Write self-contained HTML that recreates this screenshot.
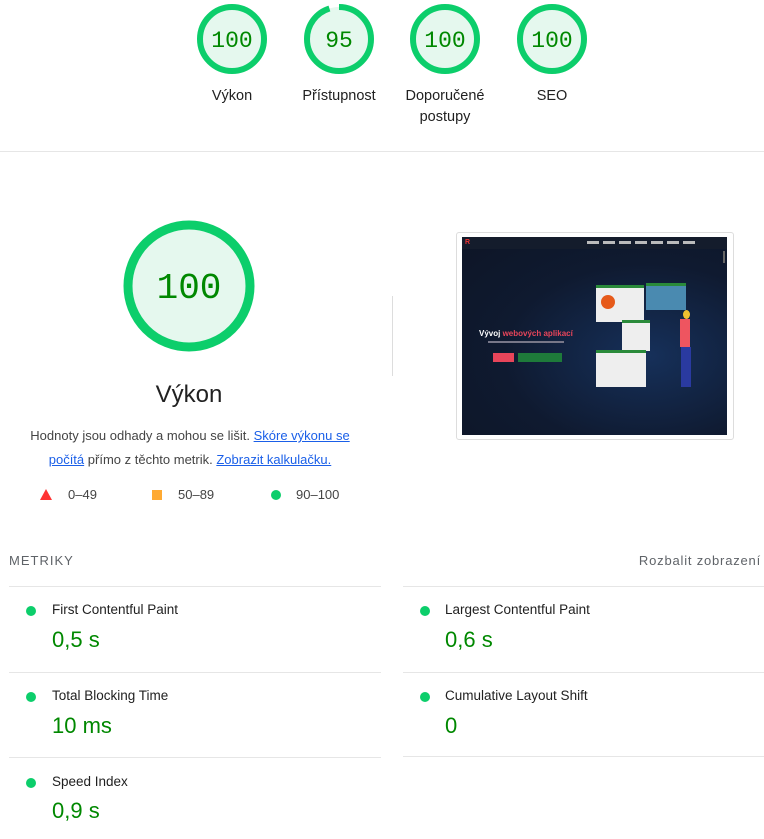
<!DOCTYPE html>
<html><head><meta charset="utf-8"><style>
body{margin:0;width:764px;height:839px;background:#fff;font-family:"Liberation Sans",Arial,sans-serif;position:relative;overflow:hidden;color:#212121}
.a{position:absolute}
.lbl{position:absolute;font-size:14.5px;color:#212121;text-align:center;width:110px;line-height:21px}
.gn{font-family:"Liberation Mono",monospace;fill:#008800}
.hr{position:absolute;height:1px;background:#e6e6e6}
.dot{position:absolute;width:10px;height:10px;border-radius:50%;background:#0cce6b}
.ml{position:absolute;font-size:13.5px;color:#212121}
.mv{position:absolute;font-size:22px;color:#008800}
a{color:#0b57d0;color:#1a5fe8}
</style></head><body>
<svg class="a" style="left:0;top:0" width="764" height="140">
<g fill="#e5f8ee" stroke="#0cce6b" stroke-width="6">
<circle cx="232" cy="39" r="32"/>
<circle cx="445" cy="39" r="32"/>
<circle cx="552" cy="39" r="32"/>
<circle cx="339" cy="39" r="32" stroke="none"/>
</g>
<circle cx="339" cy="39" r="32" fill="none" stroke="#0cce6b" stroke-width="6" stroke-dasharray="191 201" transform="rotate(-90 339 39)"/>
<g class="gn" font-size="23" text-anchor="middle">
<text x="232" y="47">100</text><text x="339" y="47">95</text><text x="445" y="47">100</text><text x="552" y="47">100</text>
</g>
</svg>
<div class="lbl" style="left:177px;top:86px">Výkon</div>
<div class="lbl" style="left:284px;top:86px">Přístupnost</div>
<div class="lbl" style="left:390px;top:86px">Doporučené<br>postupy</div>
<div class="lbl" style="left:497px;top:86px">SEO</div>
<div class="hr" style="left:0;top:151px;width:764px"></div>

<svg class="a" style="left:120px;top:218px" width="140" height="140">
<circle cx="69" cy="68" r="61" fill="#e5f8ee" stroke="#0cce6b" stroke-width="9"/>
<text x="69" y="80" class="gn" font-size="36" text-anchor="middle">100</text>
</svg>
<div class="a" style="left:89px;top:381px;width:200px;text-align:center;font-size:24px;color:#212121">Výkon</div>
<div class="a" style="left:20px;top:424px;width:340px;text-align:center;font-size:13px;line-height:24px;color:#444">Hodnoty jsou odhady a mohou se lišit. <a href="#">Skóre výkonu se počítá</a> přímo z těchto metrik. <a href="#">Zobrazit kalkulačku.</a></div>
<svg class="a" style="left:40px;top:489px" width="12" height="11"><polygon points="6,0 12,11 0,11" fill="#f33"/></svg>
<div class="a" style="left:68px;top:487px;font-size:13px;color:#444">0–49</div>
<div class="a" style="left:152px;top:490px;width:10px;height:10px;background:#fa3"></div>
<div class="a" style="left:178px;top:487px;font-size:13px;color:#444">50–89</div>
<div class="dot" style="left:271px;top:490px"></div>
<div class="a" style="left:296px;top:487px;font-size:13px;color:#444">90–100</div>

<div class="a" style="left:392px;top:296px;width:1px;height:80px;background:#ddd"></div>
<div class="a" style="left:456px;top:232px;width:276px;height:206px;border:1px solid #ddd;border-radius:3px;background:#fff"></div>
<div class="a" style="left:462px;top:237px;width:265px;height:198px;background:radial-gradient(ellipse at 70% 60%,#16305a 0%,#0f1a30 55%,#0d1526 100%)">
  <div class="a" style="left:0;top:0;width:265px;height:12px;background:#141c2c"></div>
  <div class="a" style="left:3px;top:2px;font-size:7px;color:#e33;font-weight:bold">R</div>
  <div class="a" style="left:125px;top:4px;width:110px;height:3px;background:repeating-linear-gradient(90deg,#bbb 0 12px,transparent 12px 16px)"></div>
  <div class="a" style="left:17px;top:92px;font-size:8px;color:#fff;font-weight:bold">Vývoj <span style="color:#e8455a">webových aplikací</span></div>
  <div class="a" style="left:26px;top:104px;width:76px;height:2px;background:#778"></div>
  <div class="a" style="left:31px;top:116px;width:21px;height:9px;background:#e8455a"></div>
  <div class="a" style="left:56px;top:116px;width:44px;height:9px;background:#1e7a3a"></div>
  <div class="a" style="left:134px;top:48px;width:48px;height:34px;background:#eee;border-top:3px solid #2a8a3a"></div>
  <div class="a" style="left:139px;top:58px;width:14px;height:14px;border-radius:50%;background:#e65a1a"></div>
  <div class="a" style="left:184px;top:46px;width:40px;height:24px;background:#4a8ab0;border-top:3px solid #2a8a3a"></div>
  <div class="a" style="left:160px;top:83px;width:28px;height:28px;background:#eee;border-top:3px solid #2a8a3a"></div>
  <div class="a" style="left:134px;top:113px;width:50px;height:34px;background:#eee;border-top:3px solid #2a8a3a"></div>
  <div class="a" style="left:218px;top:82px;width:10px;height:28px;background:#ee5560"></div>
  <div class="a" style="left:219px;top:110px;width:10px;height:40px;background:#2a3aa0"></div>
  <div class="a" style="left:221px;top:73px;width:7px;height:9px;background:#f0c030;border-radius:50%"></div>
  <div class="a" style="left:261px;top:14px;width:2px;height:12px;background:#666"></div>
</div>

<div class="a" style="left:9px;top:553px;font-size:13px;letter-spacing:1px;color:#5f6368">METRIKY</div>
<div class="a" style="right:3px;top:553px;font-size:13px;letter-spacing:.8px;color:#5f6368">Rozbalit zobrazení</div>
<div class="hr" style="left:9px;top:586px;width:372px"></div>
<div class="hr" style="left:403px;top:586px;width:361px"></div>
<div class="hr" style="left:9px;top:672px;width:372px"></div>
<div class="hr" style="left:403px;top:672px;width:361px"></div>
<div class="hr" style="left:9px;top:757px;width:372px"></div>
<div class="hr" style="left:403px;top:756px;width:361px"></div>

<div class="dot" style="left:26px;top:606px"></div><div class="ml" style="left:52px;top:602px">First Contentful Paint</div><div class="mv" style="left:52px;top:627px">0,5 s</div>
<div class="dot" style="left:420px;top:606px"></div><div class="ml" style="left:445px;top:602px">Largest Contentful Paint</div><div class="mv" style="left:445px;top:627px">0,6 s</div>
<div class="dot" style="left:26px;top:692px"></div><div class="ml" style="left:52px;top:688px">Total Blocking Time</div><div class="mv" style="left:52px;top:713px">10 ms</div>
<div class="dot" style="left:420px;top:692px"></div><div class="ml" style="left:445px;top:688px">Cumulative Layout Shift</div><div class="mv" style="left:445px;top:713px">0</div>
<div class="dot" style="left:26px;top:778px"></div><div class="ml" style="left:52px;top:774px">Speed Index</div><div class="mv" style="left:52px;top:798px">0,9 s</div>
</body></html>
